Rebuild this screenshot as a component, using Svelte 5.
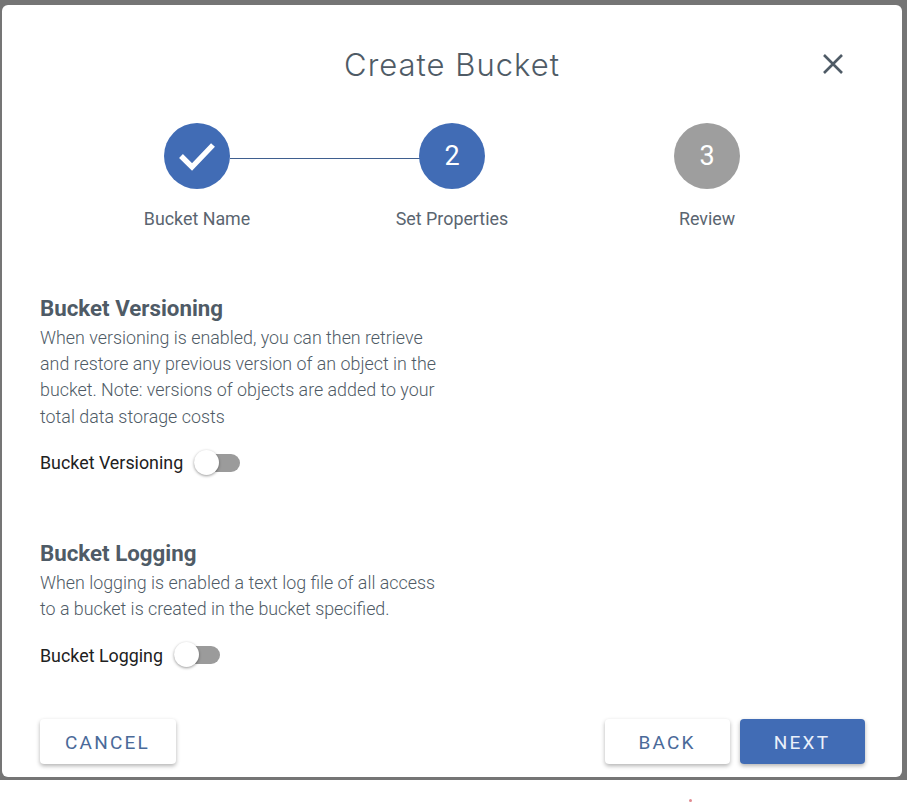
<script lang="ts">
	// Create Bucket wizard, step 2 of 3
	const steps = [
		{ label: 'Bucket Name', state: 'done', mark: '' },
		{ label: 'Set Properties', state: 'active', mark: '2' },
		{ label: 'Review', state: 'todo', mark: '3' }
	];

	const sections = [
		{
			title: 'Bucket Versioning',
			lines: [
				'When versioning is enabled, you can then retrieve',
				'and restore any previous version of an object in the',
				'bucket. Note: versions of objects are added to your',
				'total data storage costs'
			]
		},
		{
			title: 'Bucket Logging',
			lines: [
				'When logging is enabled a text log file of all access',
				'to a bucket is created in the bucket specified.'
			]
		}
	];
</script>

<div class="backdrop">
	<div class="modal">
		<header>
			<h1>Create Bucket</h1>
			<button class="close" aria-label="Close">
				<svg viewBox="0 0 20 20" width="20" height="20">
					<path d="M1 1 L19 19 M19 1 L1 19" fill="none" stroke="#4f5b66" stroke-width="2.6" />
				</svg>
			</button>
		</header>

		<ol class="stepper">
			{#each steps as step}
				<li class="step {step.state}">
					<span class="dot">
						{#if step.state === 'done'}
							<svg viewBox="0 0 38 30" width="38" height="30">
								<path d="M3 15 L14 26 L35 4" fill="none" stroke="#fff" stroke-width="5.4" />
							</svg>
						{:else}
							{step.mark}
						{/if}
					</span>
					<span class="label">{step.label}</span>
				</li>
			{/each}
		</ol>

		<main>
			{#each sections as section}
				<section>
					<h2>{section.title}</h2>
					<p>
						{#each section.lines as line}
							<span>{line}</span>
						{/each}
					</p>
					<div class="toggle-row">
						<span class="toggle-label">{section.title}</span>
						<span class="switch"><span class="thumb"></span></span>
					</div>
				</section>
			{/each}
		</main>

		<footer>
			<button class="btn">CANCEL</button>
			<div class="right">
				<button class="btn">BACK</button>
				<button class="btn primary">NEXT</button>
			</div>
		</footer>
	</div>
</div>
<div class="below"><span class="speck"></span></div>

<style>
	:global(body) {
		margin: 0;
		background: #fff;
	}

	.backdrop {
		background: #757575;
		padding: 5px 5px 3px 2px;
	}

	.modal {
		box-sizing: border-box;
		height: 772px;
		background: #fff;
		border-radius: 6px;
		padding: 0 37px 0 38px;
		display: flex;
		flex-direction: column;
		font-family: Roboto, sans-serif;
	}

	header {
		position: relative;
		height: 118px;
		margin-left: -1px;
		display: flex;
		justify-content: center;
		padding-top: 40px;
		box-sizing: border-box;
	}

	h1 {
		margin: 0;
		font-family: Inter, sans-serif;
		font-weight: 300;
		font-size: 31px;
		line-height: 40px;
		letter-spacing: 1px;
		color: #4f5b66;
	}

	.close {
		position: absolute;
		right: 22px;
		top: 49px;
		padding: 0;
		border: 0;
		background: none;
		display: flex;
	}

	.stepper {
		list-style: none;
		margin: 0 0 0 -1px;
		padding: 0;
		align-self: center;
		display: grid;
		grid-template-columns: repeat(3, 255px);
	}

	.step {
		position: relative;
		display: flex;
		flex-direction: column;
		align-items: center;
		gap: 20px;
	}

	.step.done::after {
		content: '';
		position: absolute;
		left: 160px;
		width: 190px;
		top: 35px;
		height: 1px;
		background: #3f5f8f;
	}

	.dot {
		width: 66px;
		height: 66px;
		border-radius: 50%;
		background: #416cb5;
		color: #fff;
		display: flex;
		align-items: center;
		justify-content: center;
		font-size: 27px;
	}

	.todo .dot {
		background: #9e9e9e;
	}

	.label {
		font-size: 17.85px;
		line-height: 20px;
		color: #5a6570;
	}

	main {
		flex: 1;
		padding-top: 66px;
		display: flex;
		flex-direction: column;
		gap: 63px;
	}

	h2 {
		margin: 0;
		font-size: 22.3px;
		line-height: 26px;
		font-weight: 700;
		color: #4f5b66;
	}

	p {
		margin: 4px 0 0;
		font-size: 17.85px;
		font-weight: 300;
		line-height: 26.2px;
		color: #4f5b66;
	}

	p span {
		display: block;
	}

	.toggle-row {
		display: flex;
		align-items: center;
		gap: 11px;
		margin-top: 19px;
		height: 28px;
	}

	.toggle-label {
		font-size: 17.85px;
		color: #212121;
	}

	.switch {
		position: relative;
		width: 46px;
		height: 18px;
		border-radius: 9px;
		background: #9b9b9b;
	}

	.thumb {
		position: absolute;
		left: 0;
		top: -4px;
		width: 25px;
		height: 25px;
		border-radius: 50%;
		background: #fff;
		box-shadow: 0 1px 3px rgba(0, 0, 0, 0.4);
	}

	footer {
		display: flex;
		justify-content: space-between;
		padding-bottom: 13px;
	}

	.right {
		display: flex;
		gap: 10px;
	}

	.btn {
		height: 45px;
		min-width: 125px;
		padding: 1px 26px 0 25px;
		border: 0;
		border-radius: 4px;
		background: #fff;
		color: #4a6a99;
		font-family: Roboto, sans-serif;
		font-size: 19px;
		letter-spacing: 2.2px;
		box-shadow: 0 2px 4px rgba(0, 0, 0, 0.3);
	}

	.btn.primary {
		background: #416cb5;
		color: #eaf0fa;
	}

	.below {
		height: 24px;
		position: relative;
	}

	.speck {
		position: absolute;
		left: 689px;
		top: 19px;
		width: 3px;
		height: 3px;
		border-radius: 50%;
		background: #e08a90;
	}
</style>
